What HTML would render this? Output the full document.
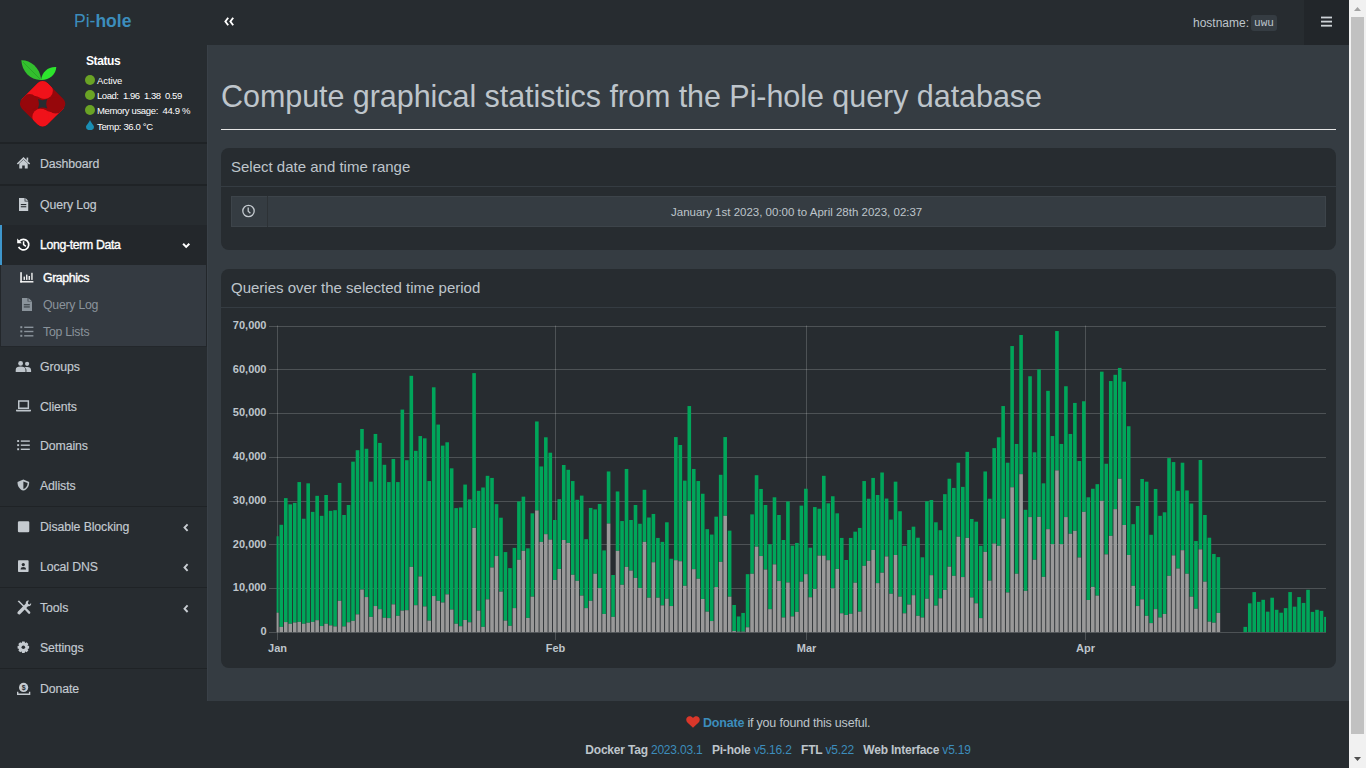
<!DOCTYPE html>
<html><head><meta charset="utf-8">
<style>
*{margin:0;padding:0;box-sizing:border-box}
html,body{width:1366px;height:768px;overflow:hidden;background:#353c42;font-family:"Liberation Sans",sans-serif;color:#bec5cb}
.abs{position:absolute}
#sidebar{position:absolute;left:0;top:0;width:207px;height:701px;background:#272c30}
#topnav{position:absolute;left:207px;top:0;width:1142px;height:45px;background:#272c30}
#content{position:absolute;left:207px;top:45px;width:1142px;height:656px;background:#353c42}
#footer{position:absolute;left:0;top:701px;width:1349px;height:67px;background:#272c30}
#scroll{position:absolute;left:1349px;top:0;width:17px;height:768px;background:#f1f1f1}
.menu{position:absolute;left:0;width:207px;height:40px}
.menu .t{position:absolute;left:40px;top:13px;font-size:12.3px;letter-spacing:-0.1px;color:#c3cad0;white-space:nowrap;-webkit-text-stroke:0.15px #c3cad0}
.menu svg{position:absolute;left:16px;top:13px}
.sep{position:absolute;left:0;width:207px;height:1px;background:#1f2326}
.sub{position:absolute;left:0;width:207px;height:27px}
.sub .t{position:absolute;left:43px;top:6px;font-size:12.3px;letter-spacing:-0.25px;color:#8a939b;white-space:nowrap}
.sub svg{position:absolute;left:20px;top:6px}
.chev{position:absolute;left:181px;top:15px}
.box{position:absolute;left:221px;width:1115px;background:#272c30;border-radius:8px}
.boxtitle{position:absolute;left:10px;font-size:15px;color:#bec5cb;white-space:nowrap}
.boxsep{position:absolute;left:0;width:1115px;height:1px;background:#353c42}
svg text{font-family:"Liberation Sans",sans-serif}
</style></head><body>
<div id="sidebar">
  <div class="abs" style="left:74px;top:11px;font-size:17.5px;color:#3c8dbc;white-space:nowrap">Pi-<b>hole</b></div>
  <!-- logo -->
  <svg class="abs" style="left:0;top:0" width="80" height="140" viewBox="0 0 80 140">
    <path d="M21.3 60.3 C30 60 40 67 41.3 80 C31 80.5 22 72 21.3 60.3Z" fill="#33bf2e"/>
    <path d="M41 80 C42 72 48 66.5 56.3 67 C56 74 50 80 41 80Z" fill="#2de52d"/>
    <defs><clipPath id="dm"><rect x="-17.2" y="-17.2" width="34.4" height="34.4" rx="6.5" transform="rotate(45)"/></clipPath></defs>
    <g transform="translate(42.6,103.8) scale(1.05)" clip-path="url(#dm)">
      <rect x="-25" y="-25" width="50" height="50" fill="#96070b"/>
      <path d="M0 -25 L-25 0 L-20 -4 C-13 -8 -9 -8.5 -5 -7 C-2 -5.5 0 -5 2 -5 A8 8 0 0 0 8.2 -16.8 L10 -15 Z" fill="#f0121a"/>
      <path d="M0 25 L25 0 L20 4 C13 8 9 8.5 5 7 C2 5.5 0 5 -2 5 A8 8 0 0 0 -8.2 16.8 L-10 15 Z" fill="#f0121a"/>
      <circle cx="2" cy="-12.5" r="7.8" fill="#f0121a"/>
      <circle cx="-2" cy="12.5" r="7.8" fill="#f0121a"/>
      <circle cx="-12.5" cy="-1.5" r="7.8" fill="#96070b"/>
      <circle cx="12.5" cy="1.5" r="7.8" fill="#96070b"/>
      <path d="M-4.5 -4.5 Q0 -2.5 4.5 -4.5 Q2.5 0 4.5 4.5 Q0 2.5 -4.5 4.5 Q-2.5 0 -4.5 -4.5Z" fill="#272c30"/>
    </g>
    <path d="M23 62 L40 79" stroke="#1f8f1f" stroke-width="0.8" opacity="0.6"/>
  </svg>
  <div class="abs" style="left:86px;top:54px;font-size:12px;letter-spacing:-0.4px;font-weight:bold;color:#fff">Status</div>
  <div class="abs" style="left:85px;top:75px;width:10px;height:10px;border-radius:50%;background:#6aa325"></div>
  <div class="abs" style="left:85px;top:90px;width:10px;height:10px;border-radius:50%;background:#6aa325"></div>
  <div class="abs" style="left:85px;top:105px;width:10px;height:10px;border-radius:50%;background:#6aa325"></div>
  <svg class="abs" style="left:86px;top:120px" width="8" height="10" viewBox="0 0 8 10"><path d="M4 0 C5 3 8 5 8 7 A4 3.2 0 0 1 0 7 C0 5 3 3 4 0Z" fill="#1a8fb5"/></svg>
  <div class="abs" style="left:97px;top:75px;font-size:9.5px;letter-spacing:-0.1px;color:#fff;white-space:nowrap">Active</div>
  <div class="abs" style="left:97px;top:90px;font-size:9.5px;letter-spacing:-0.45px;color:#fff;white-space:nowrap">Load:&nbsp;&nbsp;1.96&nbsp;&nbsp;1.38&nbsp;&nbsp;0.59</div>
  <div class="abs" style="left:97px;top:105px;font-size:9.5px;letter-spacing:-0.35px;color:#fff;white-space:nowrap">Memory usage:&nbsp; 44.9 %</div>
  <div class="abs" style="left:97px;top:121px;font-size:9.5px;letter-spacing:-0.35px;color:#fff;white-space:nowrap">Temp: 36.0 °C</div>

  <div class="sep" style="top:142px;height:2px"></div>
  <div class="menu" style="top:144px"><div class="t">Dashboard</div></div>
  <div class="sep" style="top:184px;height:2px"></div>
  <div class="menu" style="top:185px"><div class="t">Query Log</div></div>
  <div class="menu" style="top:225px;background:#23272b;border-left:2px solid #3e96cc"><div class="t" style="color:#fff;left:38px;letter-spacing:-0.35px;-webkit-text-stroke:0.35px #fff">Long-term Data</div></div>
  <div class="abs" style="left:0;top:265px;width:207px;height:82px;background:#23272b"></div><div class="abs" style="left:1px;top:265px;width:205px;height:81px;background:#343a41"></div>
  <div class="sub" style="top:265px"><div class="t" style="color:#fff;letter-spacing:-0.4px;-webkit-text-stroke:0.35px #fff">Graphics</div></div>
  <div class="sub" style="top:292px"><div class="t">Query Log</div></div>
  <div class="sub" style="top:319px"><div class="t">Top Lists</div></div>
  <div class="menu" style="top:347px"><div class="t">Groups</div></div>
  <div class="menu" style="top:387px"><div class="t">Clients</div></div>
  <div class="menu" style="top:426px"><div class="t">Domains</div></div>
  <div class="menu" style="top:466px"><div class="t">Adlists</div></div>
  <div class="sep" style="top:506px"></div>
  <div class="menu" style="top:507px"><div class="t">Disable Blocking</div></div>
  <div class="menu" style="top:547px"><div class="t">Local DNS</div></div>
  <div class="sep" style="top:587px"></div>
  <div class="menu" style="top:588px"><div class="t">Tools</div></div>
  <div class="menu" style="top:628px"><div class="t">Settings</div></div>
  <div class="sep" style="top:668px"></div>
  <div class="menu" style="top:669px"><div class="t">Donate</div></div>
</div>

<div id="topnav">
    <div class="abs" style="left:986px;top:16px;font-size:12px;color:#bec5cb;white-space:nowrap">hostname:</div>
  <div class="abs" style="left:1044px;top:15px;width:26px;height:16px;border-radius:3px;background:#353c42;font-family:'Liberation Mono',monospace;font-size:11px;color:#bec5cb;text-align:center;line-height:16px">uwu</div>
  <div class="abs" style="left:1097px;top:0;width:45px;height:45px;background:#22262a"></div>
  <svg class="abs" style="left:1114px;top:14px" width="12" height="14"><g fill="#cdd2d6"><rect x="0" y="2.6" width="11" height="1.8"/><rect x="0" y="6.7" width="11" height="1.8"/><rect x="0" y="10.8" width="11" height="1.8"/></g></svg>
</div>

<div class="abs" style="left:207px;top:45px;width:1px;height:656px;background:#3a4148;z-index:2"></div>
<div id="content">
  <div class="abs" style="left:14px;top:34px;font-size:30.5px;letter-spacing:-0.05px;color:#bec5cb;white-space:nowrap">Compute graphical statistics from the Pi-hole query database</div>
  <div class="abs" style="left:14px;top:84px;width:1115px;height:1px;background:#e6e6e6"></div>
</div>

<div class="box" style="top:148px;height:102px">
  <div class="boxtitle" style="top:10px">Select date and time range</div>
  <div class="boxsep" style="top:38px"></div>
  <div class="abs" style="left:10px;top:48px;width:1095px;height:31px;background:#353c42;border:1px solid #3d444a"></div>
  <div class="abs" style="left:46px;top:48px;width:1px;height:31px;background:#2d3236"></div>
  <div class="abs" style="left:450px;top:58px;font-size:11.5px;color:#bec5cb;white-space:nowrap">January 1st 2023, 00:00 to April 28th 2023, 02:37</div>
</div>

<div class="box" style="top:269px;height:399px">
  <div class="boxtitle" style="top:10px">Queries over the selected time period</div>
  <div class="boxsep" style="top:38px"></div>
</div>

<svg class="abs" style="left:0;top:0" width="1366" height="768" viewBox="0 0 1366 768">
<g font-size="11" font-weight="bold" fill="#bec5cb">
<line x1="269" y1="632.5" x2="1326" y2="632.5" stroke="rgba(255,255,255,0.18)" stroke-width="1"/>
<text x="266.5" y="635.2" text-anchor="end">0</text>
<line x1="269" y1="588.5" x2="1326" y2="588.5" stroke="rgba(255,255,255,0.18)" stroke-width="1"/>
<text x="266.5" y="591.4" text-anchor="end">10,000</text>
<line x1="269" y1="544.5" x2="1326" y2="544.5" stroke="rgba(255,255,255,0.18)" stroke-width="1"/>
<text x="266.5" y="547.7" text-anchor="end">20,000</text>
<line x1="269" y1="501.5" x2="1326" y2="501.5" stroke="rgba(255,255,255,0.18)" stroke-width="1"/>
<text x="266.5" y="503.9" text-anchor="end">30,000</text>
<line x1="269" y1="457.5" x2="1326" y2="457.5" stroke="rgba(255,255,255,0.18)" stroke-width="1"/>
<text x="266.5" y="460.1" text-anchor="end">40,000</text>
<line x1="269" y1="413.5" x2="1326" y2="413.5" stroke="rgba(255,255,255,0.18)" stroke-width="1"/>
<text x="266.5" y="416.4" text-anchor="end">50,000</text>
<line x1="269" y1="369.5" x2="1326" y2="369.5" stroke="rgba(255,255,255,0.18)" stroke-width="1"/>
<text x="266.5" y="372.6" text-anchor="end">60,000</text>
<line x1="269" y1="326.5" x2="1326" y2="326.5" stroke="rgba(255,255,255,0.18)" stroke-width="1"/>
<text x="266.5" y="328.8" text-anchor="end">70,000</text>
<line x1="277.5" y1="325.5" x2="277.5" y2="640" stroke="rgba(255,255,255,0.18)" stroke-width="1"/>
<text x="277.5" y="652" text-anchor="middle">Jan</text>
<line x1="555.5" y1="325.5" x2="555.5" y2="640" stroke="rgba(255,255,255,0.18)" stroke-width="1"/>
<text x="555.5" y="652" text-anchor="middle">Feb</text>
<line x1="806.5" y1="325.5" x2="806.5" y2="640" stroke="rgba(255,255,255,0.18)" stroke-width="1"/>
<text x="806.5" y="652" text-anchor="middle">Mar</text>
<line x1="1085.5" y1="325.5" x2="1085.5" y2="640" stroke="rgba(255,255,255,0.18)" stroke-width="1"/>
<text x="1085.5" y="652" text-anchor="middle">Apr</text>
</g>
<rect x="276.60" y="536.25" width="2.00" height="76.46" fill="#00a65a"/>
<rect x="276.60" y="612.71" width="2.00" height="19.39" fill="#999"/>
<rect x="279.48" y="524.79" width="3.60" height="102.08" fill="#00a65a"/>
<rect x="279.48" y="626.88" width="3.60" height="5.23" fill="#999"/>
<rect x="283.97" y="498.12" width="3.60" height="123.96" fill="#00a65a"/>
<rect x="283.97" y="622.08" width="3.60" height="10.02" fill="#999"/>
<rect x="288.45" y="504.38" width="3.60" height="119.38" fill="#00a65a"/>
<rect x="288.45" y="623.75" width="3.60" height="8.35" fill="#999"/>
<rect x="292.93" y="502.92" width="3.60" height="119.58" fill="#00a65a"/>
<rect x="292.93" y="622.50" width="3.60" height="9.60" fill="#999"/>
<rect x="297.42" y="482.08" width="3.60" height="139.79" fill="#00a65a"/>
<rect x="297.42" y="621.88" width="3.60" height="10.23" fill="#999"/>
<rect x="301.90" y="518.75" width="3.60" height="105.00" fill="#00a65a"/>
<rect x="301.90" y="623.75" width="3.60" height="8.35" fill="#999"/>
<rect x="306.39" y="483.33" width="3.60" height="139.38" fill="#00a65a"/>
<rect x="306.39" y="622.71" width="3.60" height="9.39" fill="#999"/>
<rect x="310.87" y="511.88" width="3.60" height="110.00" fill="#00a65a"/>
<rect x="310.87" y="621.88" width="3.60" height="10.23" fill="#999"/>
<rect x="315.35" y="495.83" width="3.60" height="124.38" fill="#00a65a"/>
<rect x="315.35" y="620.21" width="3.60" height="11.89" fill="#999"/>
<rect x="319.84" y="515.83" width="3.60" height="110.21" fill="#00a65a"/>
<rect x="319.84" y="626.04" width="3.60" height="6.06" fill="#999"/>
<rect x="324.32" y="495.00" width="3.60" height="128.75" fill="#00a65a"/>
<rect x="324.32" y="623.75" width="3.60" height="8.35" fill="#999"/>
<rect x="328.80" y="510.83" width="3.60" height="114.58" fill="#00a65a"/>
<rect x="328.80" y="625.42" width="3.60" height="6.68" fill="#999"/>
<rect x="333.29" y="510.21" width="3.60" height="116.25" fill="#00a65a"/>
<rect x="333.29" y="626.46" width="3.60" height="5.64" fill="#999"/>
<rect x="337.77" y="482.92" width="3.60" height="117.92" fill="#00a65a"/>
<rect x="337.77" y="600.83" width="3.60" height="31.27" fill="#999"/>
<rect x="342.25" y="515.00" width="3.60" height="111.46" fill="#00a65a"/>
<rect x="342.25" y="626.46" width="3.60" height="5.64" fill="#999"/>
<rect x="346.74" y="505.00" width="3.60" height="117.29" fill="#00a65a"/>
<rect x="346.74" y="622.29" width="3.60" height="9.81" fill="#999"/>
<rect x="351.22" y="461.67" width="3.60" height="159.17" fill="#00a65a"/>
<rect x="351.22" y="620.83" width="3.60" height="11.27" fill="#999"/>
<rect x="355.70" y="450.21" width="3.60" height="164.17" fill="#00a65a"/>
<rect x="355.70" y="614.38" width="3.60" height="17.73" fill="#999"/>
<rect x="360.19" y="428.96" width="3.60" height="160.62" fill="#00a65a"/>
<rect x="360.19" y="589.58" width="3.60" height="42.52" fill="#999"/>
<rect x="364.67" y="448.75" width="3.60" height="148.33" fill="#00a65a"/>
<rect x="364.67" y="597.08" width="3.60" height="35.02" fill="#999"/>
<rect x="369.16" y="481.67" width="3.60" height="135.21" fill="#00a65a"/>
<rect x="369.16" y="616.88" width="3.60" height="15.23" fill="#999"/>
<rect x="373.64" y="433.96" width="3.60" height="172.08" fill="#00a65a"/>
<rect x="373.64" y="606.04" width="3.60" height="26.06" fill="#999"/>
<rect x="378.12" y="442.92" width="3.60" height="166.25" fill="#00a65a"/>
<rect x="378.12" y="609.17" width="3.60" height="22.93" fill="#999"/>
<rect x="382.61" y="464.79" width="3.60" height="152.92" fill="#00a65a"/>
<rect x="382.61" y="617.71" width="3.60" height="14.39" fill="#999"/>
<rect x="387.09" y="482.08" width="3.60" height="136.04" fill="#00a65a"/>
<rect x="387.09" y="618.12" width="3.60" height="13.98" fill="#999"/>
<rect x="391.57" y="458.96" width="3.60" height="145.42" fill="#00a65a"/>
<rect x="391.57" y="604.38" width="3.60" height="27.73" fill="#999"/>
<rect x="396.06" y="482.08" width="3.60" height="133.75" fill="#00a65a"/>
<rect x="396.06" y="615.83" width="3.60" height="16.27" fill="#999"/>
<rect x="400.54" y="409.58" width="3.60" height="201.04" fill="#00a65a"/>
<rect x="400.54" y="610.62" width="3.60" height="21.48" fill="#999"/>
<rect x="405.02" y="460.21" width="3.60" height="150.00" fill="#00a65a"/>
<rect x="405.02" y="610.21" width="3.60" height="21.89" fill="#999"/>
<rect x="409.51" y="375.83" width="3.60" height="191.04" fill="#00a65a"/>
<rect x="409.51" y="566.88" width="3.60" height="65.23" fill="#999"/>
<rect x="413.99" y="450.83" width="3.60" height="154.38" fill="#00a65a"/>
<rect x="413.99" y="605.21" width="3.60" height="26.89" fill="#999"/>
<rect x="418.48" y="436.04" width="3.60" height="140.42" fill="#00a65a"/>
<rect x="418.48" y="576.46" width="3.60" height="55.64" fill="#999"/>
<rect x="422.96" y="438.33" width="3.60" height="168.12" fill="#00a65a"/>
<rect x="422.96" y="606.46" width="3.60" height="25.64" fill="#999"/>
<rect x="427.44" y="481.04" width="3.60" height="139.58" fill="#00a65a"/>
<rect x="427.44" y="620.62" width="3.60" height="11.48" fill="#999"/>
<rect x="431.93" y="387.29" width="3.60" height="208.75" fill="#00a65a"/>
<rect x="431.93" y="596.04" width="3.60" height="36.06" fill="#999"/>
<rect x="436.41" y="424.58" width="3.60" height="176.25" fill="#00a65a"/>
<rect x="436.41" y="600.83" width="3.60" height="31.27" fill="#999"/>
<rect x="440.89" y="445.62" width="3.60" height="156.88" fill="#00a65a"/>
<rect x="440.89" y="602.50" width="3.60" height="29.60" fill="#999"/>
<rect x="445.38" y="442.29" width="3.60" height="152.08" fill="#00a65a"/>
<rect x="445.38" y="594.38" width="3.60" height="37.73" fill="#999"/>
<rect x="449.86" y="468.33" width="3.60" height="141.25" fill="#00a65a"/>
<rect x="449.86" y="609.58" width="3.60" height="22.52" fill="#999"/>
<rect x="454.34" y="508.12" width="3.60" height="115.62" fill="#00a65a"/>
<rect x="454.34" y="623.75" width="3.60" height="8.35" fill="#999"/>
<rect x="458.83" y="507.50" width="3.60" height="118.75" fill="#00a65a"/>
<rect x="458.83" y="626.25" width="3.60" height="5.85" fill="#999"/>
<rect x="463.31" y="484.58" width="3.60" height="135.42" fill="#00a65a"/>
<rect x="463.31" y="620.00" width="3.60" height="12.10" fill="#999"/>
<rect x="467.79" y="499.38" width="3.60" height="122.92" fill="#00a65a"/>
<rect x="467.79" y="622.29" width="3.60" height="9.81" fill="#999"/>
<rect x="472.28" y="373.12" width="3.60" height="154.79" fill="#00a65a"/>
<rect x="472.28" y="527.92" width="3.60" height="104.18" fill="#999"/>
<rect x="476.76" y="490.83" width="3.60" height="119.79" fill="#00a65a"/>
<rect x="476.76" y="610.62" width="3.60" height="21.48" fill="#999"/>
<rect x="481.25" y="487.50" width="3.60" height="139.38" fill="#00a65a"/>
<rect x="481.25" y="626.88" width="3.60" height="5.23" fill="#999"/>
<rect x="485.73" y="475.83" width="3.60" height="123.54" fill="#00a65a"/>
<rect x="485.73" y="599.38" width="3.60" height="32.73" fill="#999"/>
<rect x="490.21" y="477.92" width="3.60" height="89.58" fill="#00a65a"/>
<rect x="490.21" y="567.50" width="3.60" height="64.60" fill="#999"/>
<rect x="494.70" y="504.17" width="3.60" height="51.87" fill="#00a65a"/>
<rect x="494.70" y="556.04" width="3.60" height="76.06" fill="#999"/>
<rect x="499.18" y="517.71" width="3.60" height="73.96" fill="#00a65a"/>
<rect x="499.18" y="591.67" width="3.60" height="40.43" fill="#999"/>
<rect x="503.66" y="552.08" width="3.60" height="68.54" fill="#00a65a"/>
<rect x="503.66" y="620.62" width="3.60" height="11.48" fill="#999"/>
<rect x="508.15" y="568.12" width="3.60" height="57.71" fill="#00a65a"/>
<rect x="508.15" y="625.83" width="3.60" height="6.27" fill="#999"/>
<rect x="512.63" y="547.92" width="3.60" height="60.21" fill="#00a65a"/>
<rect x="512.63" y="608.12" width="3.60" height="23.98" fill="#999"/>
<rect x="517.11" y="501.46" width="3.60" height="58.33" fill="#00a65a"/>
<rect x="517.11" y="559.79" width="3.60" height="72.31" fill="#999"/>
<rect x="521.60" y="496.67" width="3.60" height="54.17" fill="#00a65a"/>
<rect x="521.60" y="550.83" width="3.60" height="81.27" fill="#999"/>
<rect x="526.08" y="548.33" width="3.60" height="69.58" fill="#00a65a"/>
<rect x="526.08" y="617.92" width="3.60" height="14.18" fill="#999"/>
<rect x="530.57" y="513.33" width="3.60" height="83.33" fill="#00a65a"/>
<rect x="530.57" y="596.67" width="3.60" height="35.43" fill="#999"/>
<rect x="535.05" y="421.46" width="3.60" height="88.96" fill="#00a65a"/>
<rect x="535.05" y="510.42" width="3.60" height="121.68" fill="#999"/>
<rect x="539.53" y="466.46" width="3.60" height="75.42" fill="#00a65a"/>
<rect x="539.53" y="541.88" width="3.60" height="90.23" fill="#999"/>
<rect x="544.02" y="437.29" width="3.60" height="96.87" fill="#00a65a"/>
<rect x="544.02" y="534.17" width="3.60" height="97.93" fill="#999"/>
<rect x="548.50" y="452.71" width="3.60" height="86.88" fill="#00a65a"/>
<rect x="548.50" y="539.58" width="3.60" height="92.52" fill="#999"/>
<rect x="552.98" y="520.00" width="3.60" height="60.00" fill="#00a65a"/>
<rect x="552.98" y="580.00" width="3.60" height="52.10" fill="#999"/>
<rect x="557.47" y="499.17" width="3.60" height="69.79" fill="#00a65a"/>
<rect x="557.47" y="568.96" width="3.60" height="63.14" fill="#999"/>
<rect x="561.95" y="465.00" width="3.60" height="75.00" fill="#00a65a"/>
<rect x="561.95" y="540.00" width="3.60" height="92.10" fill="#999"/>
<rect x="566.43" y="469.79" width="3.60" height="73.12" fill="#00a65a"/>
<rect x="566.43" y="542.92" width="3.60" height="89.18" fill="#999"/>
<rect x="570.92" y="481.04" width="3.60" height="93.75" fill="#00a65a"/>
<rect x="570.92" y="574.79" width="3.60" height="57.31" fill="#999"/>
<rect x="575.40" y="499.79" width="3.60" height="81.04" fill="#00a65a"/>
<rect x="575.40" y="580.83" width="3.60" height="51.27" fill="#999"/>
<rect x="579.88" y="495.62" width="3.60" height="100.00" fill="#00a65a"/>
<rect x="579.88" y="595.62" width="3.60" height="36.48" fill="#999"/>
<rect x="584.37" y="539.17" width="3.60" height="68.96" fill="#00a65a"/>
<rect x="584.37" y="608.12" width="3.60" height="23.98" fill="#999"/>
<rect x="588.85" y="507.92" width="3.60" height="92.92" fill="#00a65a"/>
<rect x="588.85" y="600.83" width="3.60" height="31.27" fill="#999"/>
<rect x="593.34" y="509.38" width="3.60" height="64.38" fill="#00a65a"/>
<rect x="593.34" y="573.75" width="3.60" height="58.35" fill="#999"/>
<rect x="597.82" y="503.96" width="3.60" height="84.17" fill="#00a65a"/>
<rect x="597.82" y="588.12" width="3.60" height="43.98" fill="#999"/>
<rect x="602.30" y="550.42" width="3.60" height="63.54" fill="#00a65a"/>
<rect x="602.30" y="613.96" width="3.60" height="18.14" fill="#999"/>
<rect x="606.79" y="471.46" width="3.60" height="52.08" fill="#00a65a"/>
<rect x="606.79" y="523.54" width="3.60" height="108.56" fill="#999"/>
<rect x="611.27" y="575.00" width="3.60" height="41.88" fill="#00a65a"/>
<rect x="611.27" y="616.88" width="3.60" height="15.23" fill="#999"/>
<rect x="615.75" y="491.46" width="3.60" height="59.38" fill="#00a65a"/>
<rect x="615.75" y="550.83" width="3.60" height="81.27" fill="#999"/>
<rect x="620.24" y="521.04" width="3.60" height="63.75" fill="#00a65a"/>
<rect x="620.24" y="584.79" width="3.60" height="47.31" fill="#999"/>
<rect x="624.72" y="468.96" width="3.60" height="97.92" fill="#00a65a"/>
<rect x="624.72" y="566.88" width="3.60" height="65.23" fill="#999"/>
<rect x="629.20" y="520.00" width="3.60" height="50.62" fill="#00a65a"/>
<rect x="629.20" y="570.62" width="3.60" height="61.48" fill="#999"/>
<rect x="633.69" y="505.00" width="3.60" height="72.92" fill="#00a65a"/>
<rect x="633.69" y="577.92" width="3.60" height="54.18" fill="#999"/>
<rect x="638.17" y="523.75" width="3.60" height="64.17" fill="#00a65a"/>
<rect x="638.17" y="587.92" width="3.60" height="44.18" fill="#999"/>
<rect x="642.66" y="489.79" width="3.60" height="52.08" fill="#00a65a"/>
<rect x="642.66" y="541.88" width="3.60" height="90.23" fill="#999"/>
<rect x="647.14" y="517.50" width="3.60" height="80.21" fill="#00a65a"/>
<rect x="647.14" y="597.71" width="3.60" height="34.39" fill="#999"/>
<rect x="651.62" y="513.96" width="3.60" height="48.33" fill="#00a65a"/>
<rect x="651.62" y="562.29" width="3.60" height="69.81" fill="#999"/>
<rect x="656.11" y="537.92" width="3.60" height="59.79" fill="#00a65a"/>
<rect x="656.11" y="597.71" width="3.60" height="34.39" fill="#999"/>
<rect x="660.59" y="541.88" width="3.60" height="63.54" fill="#00a65a"/>
<rect x="660.59" y="605.42" width="3.60" height="26.68" fill="#999"/>
<rect x="665.07" y="522.29" width="3.60" height="76.46" fill="#00a65a"/>
<rect x="665.07" y="598.75" width="3.60" height="33.35" fill="#999"/>
<rect x="669.56" y="558.75" width="3.60" height="47.29" fill="#00a65a"/>
<rect x="669.56" y="606.04" width="3.60" height="26.06" fill="#999"/>
<rect x="674.04" y="437.08" width="3.60" height="123.12" fill="#00a65a"/>
<rect x="674.04" y="560.21" width="3.60" height="71.89" fill="#999"/>
<rect x="678.52" y="445.00" width="3.60" height="116.25" fill="#00a65a"/>
<rect x="678.52" y="561.25" width="3.60" height="70.85" fill="#999"/>
<rect x="683.01" y="480.62" width="3.60" height="105.21" fill="#00a65a"/>
<rect x="683.01" y="585.83" width="3.60" height="46.27" fill="#999"/>
<rect x="687.49" y="406.04" width="3.60" height="94.79" fill="#00a65a"/>
<rect x="687.49" y="500.83" width="3.60" height="131.27" fill="#999"/>
<rect x="691.97" y="468.96" width="3.60" height="100.21" fill="#00a65a"/>
<rect x="691.97" y="569.17" width="3.60" height="62.93" fill="#999"/>
<rect x="696.46" y="481.04" width="3.60" height="97.71" fill="#00a65a"/>
<rect x="696.46" y="578.75" width="3.60" height="53.35" fill="#999"/>
<rect x="700.94" y="493.75" width="3.60" height="105.21" fill="#00a65a"/>
<rect x="700.94" y="598.96" width="3.60" height="33.14" fill="#999"/>
<rect x="705.43" y="529.17" width="3.60" height="82.50" fill="#00a65a"/>
<rect x="705.43" y="611.67" width="3.60" height="20.43" fill="#999"/>
<rect x="709.91" y="534.58" width="3.60" height="86.46" fill="#00a65a"/>
<rect x="709.91" y="621.04" width="3.60" height="11.06" fill="#999"/>
<rect x="714.39" y="516.67" width="3.60" height="70.42" fill="#00a65a"/>
<rect x="714.39" y="587.08" width="3.60" height="45.02" fill="#999"/>
<rect x="718.88" y="474.79" width="3.60" height="87.08" fill="#00a65a"/>
<rect x="718.88" y="561.88" width="3.60" height="70.23" fill="#999"/>
<rect x="723.36" y="437.08" width="3.60" height="78.75" fill="#00a65a"/>
<rect x="723.36" y="515.83" width="3.60" height="116.27" fill="#999"/>
<rect x="727.84" y="530.62" width="3.60" height="66.04" fill="#00a65a"/>
<rect x="727.84" y="596.67" width="3.60" height="35.43" fill="#999"/>
<rect x="732.33" y="605.00" width="3.60" height="26.04" fill="#00a65a"/>
<rect x="732.33" y="631.04" width="3.60" height="1.06" fill="#999"/>
<rect x="736.81" y="616.46" width="3.60" height="15.21" fill="#00a65a"/>
<rect x="736.81" y="631.67" width="3.60" height="0.43" fill="#999"/>
<rect x="741.29" y="612.92" width="3.60" height="18.75" fill="#00a65a"/>
<rect x="741.29" y="631.67" width="3.60" height="0.43" fill="#999"/>
<rect x="745.78" y="574.17" width="3.60" height="53.13" fill="#00a65a"/>
<rect x="745.78" y="627.29" width="3.60" height="4.81" fill="#999"/>
<rect x="750.26" y="514.38" width="3.60" height="59.38" fill="#00a65a"/>
<rect x="750.26" y="573.75" width="3.60" height="58.35" fill="#999"/>
<rect x="754.75" y="475.21" width="3.60" height="71.46" fill="#00a65a"/>
<rect x="754.75" y="546.67" width="3.60" height="85.43" fill="#999"/>
<rect x="759.23" y="488.96" width="3.60" height="67.08" fill="#00a65a"/>
<rect x="759.23" y="556.04" width="3.60" height="76.06" fill="#999"/>
<rect x="763.71" y="505.00" width="3.60" height="64.58" fill="#00a65a"/>
<rect x="763.71" y="569.58" width="3.60" height="62.52" fill="#999"/>
<rect x="768.20" y="544.17" width="3.60" height="65.00" fill="#00a65a"/>
<rect x="768.20" y="609.17" width="3.60" height="22.93" fill="#999"/>
<rect x="772.68" y="497.29" width="3.60" height="67.08" fill="#00a65a"/>
<rect x="772.68" y="564.38" width="3.60" height="67.73" fill="#999"/>
<rect x="777.16" y="515.00" width="3.60" height="66.04" fill="#00a65a"/>
<rect x="777.16" y="581.04" width="3.60" height="51.06" fill="#999"/>
<rect x="781.65" y="540.00" width="3.60" height="77.50" fill="#00a65a"/>
<rect x="781.65" y="617.50" width="3.60" height="14.60" fill="#999"/>
<rect x="786.13" y="501.46" width="3.60" height="81.04" fill="#00a65a"/>
<rect x="786.13" y="582.50" width="3.60" height="49.60" fill="#999"/>
<rect x="790.61" y="545.62" width="3.60" height="70.83" fill="#00a65a"/>
<rect x="790.61" y="616.46" width="3.60" height="15.64" fill="#999"/>
<rect x="795.10" y="542.92" width="3.60" height="68.96" fill="#00a65a"/>
<rect x="795.10" y="611.88" width="3.60" height="20.23" fill="#999"/>
<rect x="799.58" y="505.62" width="3.60" height="76.04" fill="#00a65a"/>
<rect x="799.58" y="581.67" width="3.60" height="50.43" fill="#999"/>
<rect x="804.06" y="488.75" width="3.60" height="85.42" fill="#00a65a"/>
<rect x="804.06" y="574.17" width="3.60" height="57.93" fill="#999"/>
<rect x="808.55" y="547.71" width="3.60" height="49.58" fill="#00a65a"/>
<rect x="808.55" y="597.29" width="3.60" height="34.81" fill="#999"/>
<rect x="813.03" y="507.08" width="3.60" height="81.88" fill="#00a65a"/>
<rect x="813.03" y="588.96" width="3.60" height="43.14" fill="#999"/>
<rect x="817.52" y="508.75" width="3.60" height="46.88" fill="#00a65a"/>
<rect x="817.52" y="555.62" width="3.60" height="76.48" fill="#999"/>
<rect x="822.00" y="475.83" width="3.60" height="79.79" fill="#00a65a"/>
<rect x="822.00" y="555.62" width="3.60" height="76.48" fill="#999"/>
<rect x="826.48" y="503.33" width="3.60" height="56.88" fill="#00a65a"/>
<rect x="826.48" y="560.21" width="3.60" height="71.89" fill="#999"/>
<rect x="830.97" y="496.25" width="3.60" height="92.08" fill="#00a65a"/>
<rect x="830.97" y="588.33" width="3.60" height="43.77" fill="#999"/>
<rect x="835.45" y="513.33" width="3.60" height="55.62" fill="#00a65a"/>
<rect x="835.45" y="568.96" width="3.60" height="63.14" fill="#999"/>
<rect x="839.93" y="537.92" width="3.60" height="75.42" fill="#00a65a"/>
<rect x="839.93" y="613.33" width="3.60" height="18.77" fill="#999"/>
<rect x="844.42" y="560.00" width="3.60" height="55.00" fill="#00a65a"/>
<rect x="844.42" y="615.00" width="3.60" height="17.10" fill="#999"/>
<rect x="848.90" y="537.92" width="3.60" height="75.83" fill="#00a65a"/>
<rect x="848.90" y="613.75" width="3.60" height="18.35" fill="#999"/>
<rect x="853.38" y="531.67" width="3.60" height="51.04" fill="#00a65a"/>
<rect x="853.38" y="582.71" width="3.60" height="49.39" fill="#999"/>
<rect x="857.87" y="527.92" width="3.60" height="83.75" fill="#00a65a"/>
<rect x="857.87" y="611.67" width="3.60" height="20.43" fill="#999"/>
<rect x="862.35" y="481.04" width="3.60" height="84.79" fill="#00a65a"/>
<rect x="862.35" y="565.83" width="3.60" height="66.27" fill="#999"/>
<rect x="866.84" y="498.75" width="3.60" height="62.08" fill="#00a65a"/>
<rect x="866.84" y="560.83" width="3.60" height="71.27" fill="#999"/>
<rect x="871.32" y="477.92" width="3.60" height="72.08" fill="#00a65a"/>
<rect x="871.32" y="550.00" width="3.60" height="82.10" fill="#999"/>
<rect x="875.80" y="495.00" width="3.60" height="88.12" fill="#00a65a"/>
<rect x="875.80" y="583.12" width="3.60" height="48.98" fill="#999"/>
<rect x="880.29" y="472.50" width="3.60" height="100.21" fill="#00a65a"/>
<rect x="880.29" y="572.71" width="3.60" height="59.39" fill="#999"/>
<rect x="884.77" y="498.54" width="3.60" height="57.92" fill="#00a65a"/>
<rect x="884.77" y="556.46" width="3.60" height="75.64" fill="#999"/>
<rect x="889.25" y="519.58" width="3.60" height="74.17" fill="#00a65a"/>
<rect x="889.25" y="593.75" width="3.60" height="38.35" fill="#999"/>
<rect x="893.74" y="481.67" width="3.60" height="73.33" fill="#00a65a"/>
<rect x="893.74" y="555.00" width="3.60" height="77.10" fill="#999"/>
<rect x="898.22" y="511.25" width="3.60" height="85.42" fill="#00a65a"/>
<rect x="898.22" y="596.67" width="3.60" height="35.43" fill="#999"/>
<rect x="902.70" y="545.83" width="3.60" height="67.50" fill="#00a65a"/>
<rect x="902.70" y="613.33" width="3.60" height="18.77" fill="#999"/>
<rect x="907.19" y="530.00" width="3.60" height="74.58" fill="#00a65a"/>
<rect x="907.19" y="604.58" width="3.60" height="27.52" fill="#999"/>
<rect x="911.67" y="526.67" width="3.60" height="68.54" fill="#00a65a"/>
<rect x="911.67" y="595.21" width="3.60" height="36.89" fill="#999"/>
<rect x="916.15" y="537.71" width="3.60" height="78.12" fill="#00a65a"/>
<rect x="916.15" y="615.83" width="3.60" height="16.27" fill="#999"/>
<rect x="920.64" y="557.29" width="3.60" height="60.21" fill="#00a65a"/>
<rect x="920.64" y="617.50" width="3.60" height="14.60" fill="#999"/>
<rect x="925.12" y="501.25" width="3.60" height="97.50" fill="#00a65a"/>
<rect x="925.12" y="598.75" width="3.60" height="33.35" fill="#999"/>
<rect x="929.61" y="500.00" width="3.60" height="75.21" fill="#00a65a"/>
<rect x="929.61" y="575.21" width="3.60" height="56.89" fill="#999"/>
<rect x="934.09" y="522.29" width="3.60" height="83.33" fill="#00a65a"/>
<rect x="934.09" y="605.62" width="3.60" height="26.48" fill="#999"/>
<rect x="938.57" y="530.21" width="3.60" height="68.12" fill="#00a65a"/>
<rect x="938.57" y="598.33" width="3.60" height="33.77" fill="#999"/>
<rect x="943.06" y="494.17" width="3.60" height="95.83" fill="#00a65a"/>
<rect x="943.06" y="590.00" width="3.60" height="42.10" fill="#999"/>
<rect x="947.54" y="478.75" width="3.60" height="87.92" fill="#00a65a"/>
<rect x="947.54" y="566.67" width="3.60" height="65.43" fill="#999"/>
<rect x="952.02" y="487.92" width="3.60" height="87.92" fill="#00a65a"/>
<rect x="952.02" y="575.83" width="3.60" height="56.27" fill="#999"/>
<rect x="956.51" y="462.71" width="3.60" height="73.96" fill="#00a65a"/>
<rect x="956.51" y="536.67" width="3.60" height="95.43" fill="#999"/>
<rect x="960.99" y="486.88" width="3.60" height="90.21" fill="#00a65a"/>
<rect x="960.99" y="577.08" width="3.60" height="55.02" fill="#999"/>
<rect x="965.47" y="451.88" width="3.60" height="86.04" fill="#00a65a"/>
<rect x="965.47" y="537.92" width="3.60" height="94.18" fill="#999"/>
<rect x="969.96" y="518.96" width="3.60" height="78.54" fill="#00a65a"/>
<rect x="969.96" y="597.50" width="3.60" height="34.60" fill="#999"/>
<rect x="974.44" y="521.67" width="3.60" height="81.67" fill="#00a65a"/>
<rect x="974.44" y="603.33" width="3.60" height="28.77" fill="#999"/>
<rect x="978.93" y="545.83" width="3.60" height="72.29" fill="#00a65a"/>
<rect x="978.93" y="618.12" width="3.60" height="13.98" fill="#999"/>
<rect x="983.41" y="471.46" width="3.60" height="80.42" fill="#00a65a"/>
<rect x="983.41" y="551.88" width="3.60" height="80.23" fill="#999"/>
<rect x="987.89" y="498.75" width="3.60" height="81.88" fill="#00a65a"/>
<rect x="987.89" y="580.62" width="3.60" height="51.48" fill="#999"/>
<rect x="992.38" y="448.12" width="3.60" height="95.42" fill="#00a65a"/>
<rect x="992.38" y="543.54" width="3.60" height="88.56" fill="#999"/>
<rect x="996.86" y="437.29" width="3.60" height="108.54" fill="#00a65a"/>
<rect x="996.86" y="545.83" width="3.60" height="86.27" fill="#999"/>
<rect x="1001.34" y="406.04" width="3.60" height="112.50" fill="#00a65a"/>
<rect x="1001.34" y="518.54" width="3.60" height="113.56" fill="#999"/>
<rect x="1005.83" y="462.71" width="3.60" height="129.79" fill="#00a65a"/>
<rect x="1005.83" y="592.50" width="3.60" height="39.60" fill="#999"/>
<rect x="1010.31" y="346.04" width="3.60" height="141.25" fill="#00a65a"/>
<rect x="1010.31" y="487.29" width="3.60" height="144.81" fill="#999"/>
<rect x="1014.79" y="443.96" width="3.60" height="129.79" fill="#00a65a"/>
<rect x="1014.79" y="573.75" width="3.60" height="58.35" fill="#999"/>
<rect x="1019.28" y="335.00" width="3.60" height="139.17" fill="#00a65a"/>
<rect x="1019.28" y="474.17" width="3.60" height="157.93" fill="#999"/>
<rect x="1023.76" y="509.79" width="3.60" height="81.04" fill="#00a65a"/>
<rect x="1023.76" y="590.83" width="3.60" height="41.27" fill="#999"/>
<rect x="1028.24" y="376.25" width="3.60" height="140.83" fill="#00a65a"/>
<rect x="1028.24" y="517.08" width="3.60" height="115.02" fill="#999"/>
<rect x="1032.73" y="452.29" width="3.60" height="107.50" fill="#00a65a"/>
<rect x="1032.73" y="559.79" width="3.60" height="72.31" fill="#999"/>
<rect x="1037.21" y="369.38" width="3.60" height="147.50" fill="#00a65a"/>
<rect x="1037.21" y="516.88" width="3.60" height="115.23" fill="#999"/>
<rect x="1041.70" y="483.33" width="3.60" height="93.54" fill="#00a65a"/>
<rect x="1041.70" y="576.88" width="3.60" height="55.23" fill="#999"/>
<rect x="1046.18" y="390.83" width="3.60" height="138.33" fill="#00a65a"/>
<rect x="1046.18" y="529.17" width="3.60" height="102.93" fill="#999"/>
<rect x="1050.66" y="436.04" width="3.60" height="108.12" fill="#00a65a"/>
<rect x="1050.66" y="544.17" width="3.60" height="87.93" fill="#999"/>
<rect x="1055.15" y="331.04" width="3.60" height="139.38" fill="#00a65a"/>
<rect x="1055.15" y="470.42" width="3.60" height="161.68" fill="#999"/>
<rect x="1059.63" y="443.96" width="3.60" height="100.21" fill="#00a65a"/>
<rect x="1059.63" y="544.17" width="3.60" height="87.93" fill="#999"/>
<rect x="1064.11" y="386.25" width="3.60" height="130.83" fill="#00a65a"/>
<rect x="1064.11" y="517.08" width="3.60" height="115.02" fill="#999"/>
<rect x="1068.60" y="433.96" width="3.60" height="99.79" fill="#00a65a"/>
<rect x="1068.60" y="533.75" width="3.60" height="98.35" fill="#999"/>
<rect x="1073.08" y="402.92" width="3.60" height="127.92" fill="#00a65a"/>
<rect x="1073.08" y="530.83" width="3.60" height="101.27" fill="#999"/>
<rect x="1077.56" y="461.04" width="3.60" height="96.46" fill="#00a65a"/>
<rect x="1077.56" y="557.50" width="3.60" height="74.60" fill="#999"/>
<rect x="1082.05" y="401.25" width="3.60" height="110.62" fill="#00a65a"/>
<rect x="1082.05" y="511.88" width="3.60" height="120.23" fill="#999"/>
<rect x="1086.53" y="497.29" width="3.60" height="102.71" fill="#00a65a"/>
<rect x="1086.53" y="600.00" width="3.60" height="32.10" fill="#999"/>
<rect x="1091.02" y="488.75" width="3.60" height="98.12" fill="#00a65a"/>
<rect x="1091.02" y="586.88" width="3.60" height="45.23" fill="#999"/>
<rect x="1095.50" y="484.17" width="3.60" height="111.46" fill="#00a65a"/>
<rect x="1095.50" y="595.62" width="3.60" height="36.48" fill="#999"/>
<rect x="1099.98" y="371.67" width="3.60" height="129.17" fill="#00a65a"/>
<rect x="1099.98" y="500.83" width="3.60" height="131.27" fill="#999"/>
<rect x="1104.47" y="463.75" width="3.60" height="90.62" fill="#00a65a"/>
<rect x="1104.47" y="554.38" width="3.60" height="77.73" fill="#999"/>
<rect x="1108.95" y="381.04" width="3.60" height="154.79" fill="#00a65a"/>
<rect x="1108.95" y="535.83" width="3.60" height="96.27" fill="#999"/>
<rect x="1113.43" y="374.79" width="3.60" height="134.38" fill="#00a65a"/>
<rect x="1113.43" y="509.17" width="3.60" height="122.93" fill="#999"/>
<rect x="1117.92" y="367.92" width="3.60" height="110.83" fill="#00a65a"/>
<rect x="1117.92" y="478.75" width="3.60" height="153.35" fill="#999"/>
<rect x="1122.40" y="381.67" width="3.60" height="143.33" fill="#00a65a"/>
<rect x="1122.40" y="525.00" width="3.60" height="107.10" fill="#999"/>
<rect x="1126.88" y="426.25" width="3.60" height="128.75" fill="#00a65a"/>
<rect x="1126.88" y="555.00" width="3.60" height="77.10" fill="#999"/>
<rect x="1131.37" y="524.17" width="3.60" height="61.67" fill="#00a65a"/>
<rect x="1131.37" y="585.83" width="3.60" height="46.27" fill="#999"/>
<rect x="1135.85" y="506.04" width="3.60" height="100.00" fill="#00a65a"/>
<rect x="1135.85" y="606.04" width="3.60" height="26.06" fill="#999"/>
<rect x="1140.33" y="478.96" width="3.60" height="120.42" fill="#00a65a"/>
<rect x="1140.33" y="599.38" width="3.60" height="32.73" fill="#999"/>
<rect x="1144.82" y="481.67" width="3.60" height="134.17" fill="#00a65a"/>
<rect x="1144.82" y="615.83" width="3.60" height="16.27" fill="#999"/>
<rect x="1149.30" y="534.79" width="3.60" height="88.33" fill="#00a65a"/>
<rect x="1149.30" y="623.12" width="3.60" height="8.98" fill="#999"/>
<rect x="1153.79" y="488.96" width="3.60" height="120.21" fill="#00a65a"/>
<rect x="1153.79" y="609.17" width="3.60" height="22.93" fill="#999"/>
<rect x="1158.27" y="515.83" width="3.60" height="101.67" fill="#00a65a"/>
<rect x="1158.27" y="617.50" width="3.60" height="14.60" fill="#999"/>
<rect x="1162.75" y="512.29" width="3.60" height="101.67" fill="#00a65a"/>
<rect x="1162.75" y="613.96" width="3.60" height="18.14" fill="#999"/>
<rect x="1167.24" y="458.12" width="3.60" height="117.71" fill="#00a65a"/>
<rect x="1167.24" y="575.83" width="3.60" height="56.27" fill="#999"/>
<rect x="1171.72" y="462.08" width="3.60" height="93.33" fill="#00a65a"/>
<rect x="1171.72" y="555.42" width="3.60" height="76.68" fill="#999"/>
<rect x="1176.20" y="490.83" width="3.60" height="77.71" fill="#00a65a"/>
<rect x="1176.20" y="568.54" width="3.60" height="63.56" fill="#999"/>
<rect x="1180.69" y="462.71" width="3.60" height="87.50" fill="#00a65a"/>
<rect x="1180.69" y="550.21" width="3.60" height="81.89" fill="#999"/>
<rect x="1185.17" y="490.42" width="3.60" height="83.33" fill="#00a65a"/>
<rect x="1185.17" y="573.75" width="3.60" height="58.35" fill="#999"/>
<rect x="1189.65" y="503.54" width="3.60" height="93.12" fill="#00a65a"/>
<rect x="1189.65" y="596.67" width="3.60" height="35.43" fill="#999"/>
<rect x="1194.14" y="541.04" width="3.60" height="67.71" fill="#00a65a"/>
<rect x="1194.14" y="608.75" width="3.60" height="23.35" fill="#999"/>
<rect x="1198.62" y="460.00" width="3.60" height="89.38" fill="#00a65a"/>
<rect x="1198.62" y="549.38" width="3.60" height="82.73" fill="#999"/>
<rect x="1203.11" y="515.00" width="3.60" height="66.67" fill="#00a65a"/>
<rect x="1203.11" y="581.67" width="3.60" height="50.43" fill="#999"/>
<rect x="1207.59" y="537.71" width="3.60" height="83.96" fill="#00a65a"/>
<rect x="1207.59" y="621.67" width="3.60" height="10.43" fill="#999"/>
<rect x="1212.07" y="553.96" width="3.60" height="68.75" fill="#00a65a"/>
<rect x="1212.07" y="622.71" width="3.60" height="9.39" fill="#999"/>
<rect x="1216.56" y="557.08" width="3.60" height="55.83" fill="#00a65a"/>
<rect x="1216.56" y="612.92" width="3.60" height="19.18" fill="#999"/>
<rect x="1243.46" y="626.88" width="3.60" height="5.23" fill="#00a65a"/>
<rect x="1247.94" y="603.33" width="3.60" height="28.77" fill="#00a65a"/>
<rect x="1252.42" y="592.08" width="3.60" height="40.02" fill="#00a65a"/>
<rect x="1256.91" y="601.88" width="3.60" height="30.23" fill="#00a65a"/>
<rect x="1261.39" y="599.79" width="3.60" height="32.31" fill="#00a65a"/>
<rect x="1265.88" y="611.67" width="3.60" height="20.43" fill="#00a65a"/>
<rect x="1270.36" y="597.71" width="3.60" height="34.39" fill="#00a65a"/>
<rect x="1274.84" y="609.79" width="3.60" height="22.31" fill="#00a65a"/>
<rect x="1279.33" y="612.71" width="3.60" height="19.39" fill="#00a65a"/>
<rect x="1283.81" y="608.12" width="3.60" height="23.98" fill="#00a65a"/>
<rect x="1288.29" y="592.08" width="3.60" height="40.02" fill="#00a65a"/>
<rect x="1292.78" y="606.67" width="3.60" height="25.43" fill="#00a65a"/>
<rect x="1297.26" y="597.08" width="3.60" height="35.02" fill="#00a65a"/>
<rect x="1301.74" y="602.92" width="3.60" height="29.18" fill="#00a65a"/>
<rect x="1306.23" y="589.79" width="3.60" height="42.31" fill="#00a65a"/>
<rect x="1310.71" y="611.88" width="3.60" height="20.23" fill="#00a65a"/>
<rect x="1315.20" y="609.79" width="3.60" height="22.31" fill="#00a65a"/>
<rect x="1319.68" y="610.83" width="3.60" height="21.27" fill="#00a65a"/>
<rect x="1324.16" y="616.88" width="1.84" height="15.23" fill="#00a65a"/>
</svg>


<svg class="abs" style="left:0;top:0;z-index:5" width="1366" height="768" viewBox="0 0 1366 768">
 <g fill="#c6ccd1">
  <!-- home -->
  <path d="M16.8 163.4 L23.5 157.1 L30.2 163.4 L29.1 164.5 L23.5 159.2 L17.9 164.5Z"/>
  <path d="M19.3 163.6 L23.5 159.7 L27.7 163.6 V168.6 H24.8 V165.4 H22.2 V168.6 H19.3Z"/>
  <rect x="26.6" y="157.6" width="1.6" height="3.2"/>
  <!-- file-alt -->
  <path d="M19 198 H24.6 V201.6 H28.2 V211 H19Z"/>
  <path d="M25.4 198 L28.2 200.8 H25.4Z"/>
  <rect x="20.8" y="204" width="5.5" height="1.1" fill="#272c30"/>
  <rect x="20.8" y="206.2" width="5.5" height="1.1" fill="#272c30"/>
 </g>
 <g fill="none" stroke="#ffffff" stroke-width="1.7">
  <path d="M19.4 241.2 A5.3 5.3 0 1 1 18.6 246.8"/>
  <path d="M23.6 241.3 V244.6 L25.9 246.4" stroke-width="1.5"/>
 </g>
 <path d="M17.2 238.6 V243.2 H21.8Z" fill="#fff"/>
 <!-- chart-bar -->
 <g fill="#fff">
  <rect x="20.3" y="272.2" width="1.5" height="10.3"/>
  <rect x="20.3" y="281.1" width="13.1" height="1.4"/>
  <rect x="23.6" y="276.6" width="1.3" height="3.3"/>
  <rect x="26.1" y="274.6" width="1.3" height="5.3"/>
  <rect x="28.6" y="276" width="1.3" height="3.9"/>
  <rect x="31.3" y="272.8" width="1.3" height="7.1"/>
 </g>
 <g fill="#8a939b">
  <path d="M22 298 H27.6 V301.6 H32 V311.1 H22Z"/>
  <path d="M28.4 298 L32 301.2 H28.4Z"/>
  <rect x="23.8" y="304.2" width="6" height="1.1" fill="#353c42"/>
  <rect x="23.8" y="306.4" width="6" height="1.1" fill="#353c42"/>
  <!-- list-ul -->
  <rect x="20.3" y="326.2" width="2" height="2"/><rect x="20.3" y="330.4" width="2" height="2"/><rect x="20.3" y="334.8" width="2" height="2"/>
  <rect x="24.2" y="326.6" width="9.2" height="1.4"/><rect x="24.2" y="330.8" width="9.2" height="1.4"/><rect x="24.2" y="335.1" width="9.2" height="1.4"/>
 </g>
 <g fill="#bec5cb">
  <!-- users -->
  <circle cx="20.6" cy="363.4" r="2.4"/>
  <circle cx="27.1" cy="363.8" r="2.1"/>
  <path d="M15.7 372 V370 C15.7 367.6 17.5 366.6 20.6 366.6 C23.7 366.6 25.5 367.6 25.5 370 V372Z"/>
  <path d="M24.6 367.4 C25.3 367 26 366.9 27.1 366.9 C29.6 366.9 31.1 368 31.1 370.2 V372 H26.4 V370 C26.4 369 25.8 368 24.6 367.4Z"/>
  <!-- laptop -->
  <path d="M18 400.3 H29.1 V408.9 H18Z M19.5 401.7 V407.5 H27.6 V401.7Z" fill-rule="evenodd"/>
  <path d="M16 409.7 H31 V410.6 C31 411.2 30.6 411.6 30 411.6 H17 C16.4 411.6 16 411.2 16 410.6Z"/>
  <!-- list -->
  <rect x="17.2" y="440.1" width="1.9" height="1.9"/><rect x="17.2" y="444.2" width="1.9" height="1.9"/><rect x="17.2" y="448.3" width="1.9" height="1.9"/>
  <rect x="20.8" y="440.4" width="9" height="1.4"/><rect x="20.8" y="444.5" width="9" height="1.4"/><rect x="20.8" y="448.6" width="9" height="1.4"/>
  <!-- shield -->
  <path d="M23.35 479.5 L29.2 481.9 C29.2 486.6 27 489.3 23.35 490.6 C19.7 489.3 17.5 486.6 17.5 481.9Z"/>
  <path d="M23.35 481.4 L27.6 483.1 C27.5 486.3 26 488.2 23.35 489.1Z" fill="#272c30"/>
 </g>
 <g fill="#c5cbd0">
  <rect x="17.9" y="521.2" width="11.4" height="11.1" rx="1.2"/>
  <!-- address book -->
  <path d="M18 561.3 C18 560.7 18.5 560.3 19 560.3 H27.6 C28.2 560.3 28.6 560.7 28.6 561.3 V570.9 C28.6 571.5 28.2 571.9 27.6 571.9 H19 C18.5 571.9 18 571.5 18 570.9Z"/>
  <circle cx="23.3" cy="564.6" r="1.6" fill="#272c30"/>
  <path d="M20.6 569.4 C20.6 567.6 21.8 566.9 23.3 566.9 C24.8 566.9 26 567.6 26 569.4Z" fill="#272c30"/>
  <!-- tools -->
  <path d="M17.6 601.2 L19 600.4 L25 606.4 L24 607.4Z"/>
  <path d="M22.8 607.6 L24.3 606.1 L30 611.8 C30.5 612.4 30.5 613 30 613.5 C29.5 614 28.8 614 28.3 613.5Z"/>
  <path d="M28.9 600.5 C27 600 25.3 601.7 25.8 603.6 L18 611.4 C17.2 612.2 17.2 613.2 18 614 C18.8 614.6 19.6 614.6 20.3 613.9 L28 606.2 C29.9 606.8 31.6 605 31.1 603 L29.6 604.4 L28.2 604.1 L27.9 602.7Z"/>
  <!-- cog -->
  <path d="M27.37 645.46 L29.11 645.96 L29.11 648.54 L27.37 649.04 L27.46 648.82 L28.33 650.41 L26.51 652.23 L24.92 651.36 L25.14 651.27 L24.64 653.01 L22.06 653.01 L21.56 651.27 L21.78 651.36 L20.19 652.23 L18.37 650.41 L19.24 648.82 L19.33 649.04 L17.59 648.54 L17.59 645.96 L19.33 645.46 L19.24 645.68 L18.37 644.09 L20.19 642.27 L21.78 643.14 L21.56 643.23 L22.06 641.49 L24.64 641.49 L25.14 643.23 L24.92 643.14 L26.51 642.27 L28.33 644.09 L27.46 645.68Z"/>
  <circle cx="23.35" cy="647.25" r="1.8" fill="#272c30"/>
  <!-- donate -->
  <circle cx="23.6" cy="687.4" r="4.6"/>
  <path d="M17 691.8 H18.4 V693.6 H28.9 V691.8 H30.3 V695 H17Z"/>
 </g>
 <text x="23.6" y="690.2" font-size="7" font-weight="bold" text-anchor="middle" fill="#272c30" style="font-family:'Liberation Sans'">$</text>
 <!-- chevrons -->
 <path d="M183.1 243.7 L186.2 246.9 L189.3 243.7" fill="none" stroke="#fff" stroke-width="2"/>
 <g fill="none" stroke="#c8cdd2" stroke-width="1.9">
  <path d="M187.6 524.3 L184.5 527.6 L187.6 530.9"/>
  <path d="M187.6 564.2 L184.5 567.5 L187.6 570.8"/>
  <path d="M187.6 605.4 L184.5 608.7 L187.6 612"/>
 </g>
 <g fill="none" stroke="#fff" stroke-width="1.9">
  <path d="M228.2 17.8 L225.4 21.5 L228.2 25.2"/>
  <path d="M233.2 17.8 L230.4 21.5 L233.2 25.2"/>
 </g>
 <g fill="none" stroke="#c4cacf">
  <circle cx="248.5" cy="211" r="5.7" stroke-width="1.3"/>
  <path d="M248.2 207.6 V211.3 L250.4 213.2" stroke-width="1.3"/>
 </g>
</svg>

<div id="footer">
  <div class="abs" style="left:207px;width:1142px;top:15px;text-align:center;font-size:12.5px;letter-spacing:-0.2px;color:#bec5cb;white-space:nowrap"><svg width="14" height="12" viewBox="0 0 14 12" style="vertical-align:-1px"><path d="M7 11.8 L1.4 6.4 C-0.4 4.6 0 1.8 2 0.7 C3.8 -0.3 5.8 0.3 7 2 C8.2 0.3 10.2 -0.3 12 0.7 C14 1.8 14.4 4.6 12.6 6.4Z" fill="#d9372a"/></svg> <b style="color:#3c8dbc">Donate</b> if you found this useful.</div>
  <div class="abs" style="left:207px;width:1142px;top:42px;text-align:center;font-size:12px;letter-spacing:-0.2px;color:#bec5cb;white-space:nowrap"><b>Docker Tag</b> <span style="color:#3c8dbc">2023.03.1</span>&nbsp;&nbsp; <b>Pi-hole</b> <span style="color:#3c8dbc">v5.16.2</span>&nbsp;&nbsp; <b>FTL</b> <span style="color:#3c8dbc">v5.22</span>&nbsp;&nbsp; <b>Web Interface</b> <span style="color:#3c8dbc">v5.19</span></div>
</div>

<div id="scroll">
  <div class="abs" style="left:2px;top:17px;width:13px;height:717px;background:#c1c1c1"></div>
  <svg class="abs" style="left:0;top:0" width="17" height="768"><path d="M5 11 L8.5 7 L12 11Z" fill="#a3a3a3"/><path d="M5 757 L8.5 761 L12 757Z" fill="#505050"/></svg>
</div>
</body></html>
